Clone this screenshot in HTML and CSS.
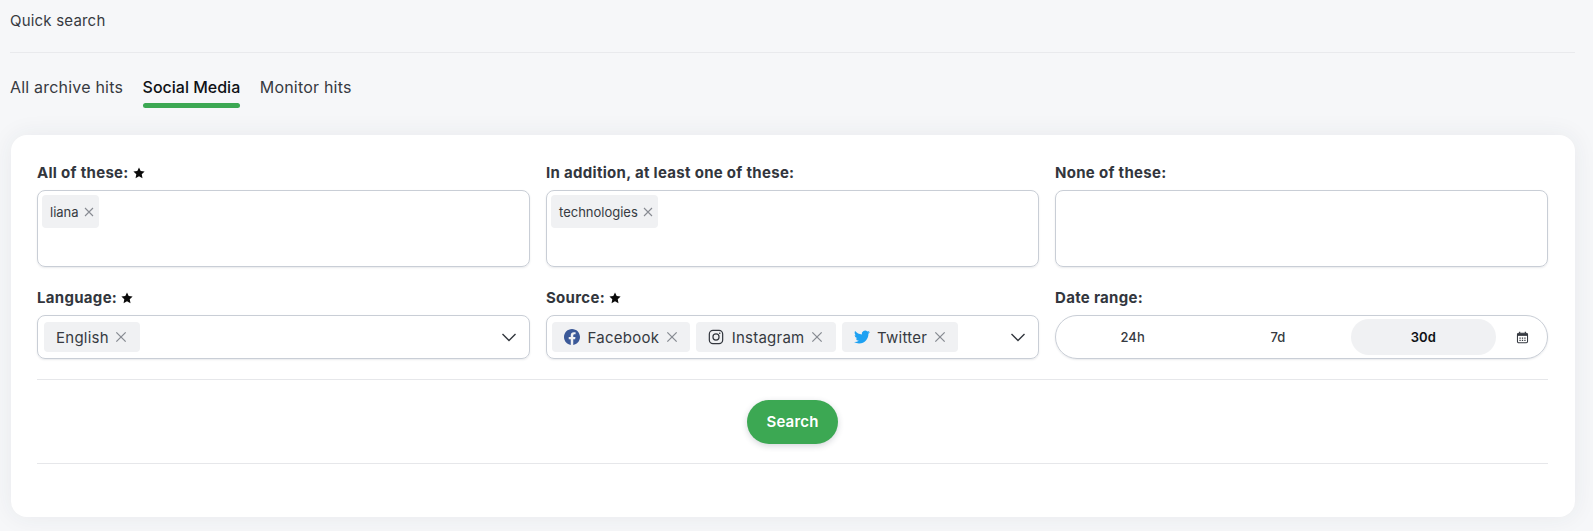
FILE: index.html
```
<!DOCTYPE html>
<html lang="en">
<head>
<meta charset="utf-8">
<title>Quick search</title>
<link rel="stylesheet" href="styles.css">
</head>
<body>
<svg class="defs" width="0" height="0" aria-hidden="true">
  <symbol id="star" viewBox="0 0 24 24"><path d="M12 1l3.400 7.200 7.800 1-5.700 5.400 1.500 7.800L12 18.600l-6.900 3.800 1.500-7.800L.8 9.200l7.800-1z"/></symbol>
  <symbol id="x" viewBox="0 0 12 12"><path d="M2 2l8 8M10 2l-8 8" fill="none" stroke="currentColor" stroke-width="1.1"/></symbol>
  <symbol id="chev" viewBox="0 0 16 10"><path d="M1.500 2l6.500 6.500L14.500 2" fill="none" stroke="currentColor" stroke-width="1.400"/></symbol>
</svg>
<main class="page">
  <h1 class="title">Quick search</h1>
  <nav class="tabs">
    <a class="tab">All archive hits</a>
    <a class="tab active">Social Media</a>
    <a class="tab">Monitor hits</a>
  </nav>
  <section class="card">
    <div class="grid">
      <div class="field">
        <label class="label">All of these: <svg class="star"><use href="#star"/></svg></label>
        <div class="area"><span class="chip">liana <svg class="x"><use href="#x"/></svg></span></div>
      </div>
      <div class="field">
        <label class="label">In addition, at least one of these:</label>
        <div class="area"><span class="chip">technologies <svg class="x"><use href="#x"/></svg></span></div>
      </div>
      <div class="field">
        <label class="label">None of these:</label>
        <div class="area"></div>
      </div>
      <div class="field">
        <label class="label">Language: <svg class="star"><use href="#star"/></svg></label>
        <div class="select">
          <span class="pill">English <svg class="x big"><use href="#x"/></svg></span>
          <svg class="chev"><use href="#chev"/></svg>
        </div>
      </div>
      <div class="field">
        <label class="label">Source: <svg class="star"><use href="#star"/></svg></label>
        <div class="select multi">
          <span class="pill">
            <svg class="brand fb" viewBox="0 0 24 24"><path d="M24 12.070C24 5.400 18.630 0 12 0S0 5.400 0 12.070c0 6.030 4.390 11.020 10.130 11.930v-8.440H7.080v-3.490h3.050V9.410c0-3.020 1.790-4.690 4.530-4.690 1.310 0 2.690.24 2.690.24v2.970h-1.520c-1.490 0-1.960.93-1.960 1.880v2.260h3.330l-.53 3.490h-2.800V24C19.610 23.090 24 18.100 24 12.070z"/></svg>
            Facebook <svg class="x big"><use href="#x"/></svg></span>
          <span class="pill">
            <svg class="brand ig" viewBox="0 0 24 24"><rect x="2" y="2" width="20" height="20" rx="5.500"/><circle cx="12" cy="12" r="4.600"/><circle class="dot" cx="17.600" cy="6.400" r="1.200"/></svg>
            Instagram <svg class="x big"><use href="#x"/></svg></span>
          <span class="pill">
            <svg class="brand tw" viewBox="0 0 24 24"><path d="M23.950 4.570a10 10 0 0 1-2.820.77 4.960 4.960 0 0 0 2.160-2.720c-.95.550-2 .96-3.130 1.190a4.920 4.920 0 0 0-8.380 4.480C7.690 8.090 4.070 6.130 1.640 3.160a4.820 4.820 0 0 0-.67 2.480c0 1.710.87 3.210 2.190 4.090a4.900 4.900 0 0 1-2.230-.62v.06a4.920 4.920 0 0 0 3.950 4.830 5 5 0 0 1-2.210.08 4.940 4.940 0 0 0 4.600 3.420A9.870 9.870 0 0 1 0 19.540a14 14 0 0 0 7.560 2.210c9.050 0 14-7.500 14-13.980 0-.21 0-.42-.02-.63a9.940 9.940 0 0 0 2.410-2.570z"/></svg>
            Twitter <svg class="x big"><use href="#x"/></svg></span>
          <svg class="chev"><use href="#chev"/></svg>
        </div>
      </div>
      <div class="field">
        <label class="label">Date range:</label>
        <div class="range">
          <span class="opt">24h</span>
          <span class="opt">7d</span>
          <span class="opt on">30d</span>
          <svg class="cal" viewBox="0 0 16 16"><path d="M4.500 1v2M11.500 1v2" fill="none" stroke="currentColor" stroke-width="1.500"/><rect x="1.800" y="2.800" width="12.400" height="11.600" rx="1.500" fill="none" stroke="currentColor" stroke-width="1.300"/><path d="M2 3h12v3H2z"/><path d="M4.200 8h1.600v1.400H4.200zM7.200 8h1.600v1.400H7.200zM10.200 8h1.600v1.400h-1.600zM4.200 10.800h1.600v1.400H4.200zM7.200 10.800h1.600v1.400H7.200zM10.200 10.800h1.600v1.400h-1.600z"/></svg>
        </div>
      </div>
    </div>
    <div class="actions"><button class="search" type="button">Search</button></div>
  </section>
</main>
</body>
</html>
```
FILE: styles.css
```
* { box-sizing: border-box; }
html, body { margin: 0; height: 100%; }
body {
  background: #f6f7f9;
  color: #363a41;
  font-family: Inter, "Liberation Sans", sans-serif;
  overflow: hidden;
}
.defs { position: absolute; }
.page { padding: 0 18px 0 10px; }
.title {
  margin: 0;
  height: 53px;
  padding-top: 12px;
  font-size: 15px;
  line-height: 17px;
  font-weight: 400;
  letter-spacing: .2px;
  border-bottom: 1px solid #e9eaed;
}
.tabs { display: flex; gap: 19.500px; margin-top: 22px; height: 33px; }
.tab {
  font-size: 16px;
  line-height: 24px;
  letter-spacing: .2px;
  color: #363a41;
  position: relative;
}
.tab.active { color: #0f1115; font-weight: 450; letter-spacing: 0; }
.tab.active::after {
  content: "";
  position: absolute;
  left: 0; right: 0; bottom: 0;
  height: 5px;
  border-radius: 3px;
  background: #3ca853;
}
.card {
  margin: 27px 0 0 1px;
  height: 382px;
  padding: 27px 27px 0 26px;
  background: #fff;
  border-radius: 16px;
  box-shadow: 0 0 24px rgba(40, 50, 70, .07);
}
.grid { display: grid; grid-template-columns: repeat(3, 1fr); column-gap: 16px; row-gap: 20px; }
.field { display: flex; flex-direction: column; gap: 7px; min-width: 0; }
.label {
  display: flex;
  align-items: center;
  gap: 4px;
  padding-top: 1px;
  font-size: 15px;
  line-height: 20px;
  font-weight: 650;
  letter-spacing: .3px;
  color: #32363d;
}
.star { width: 12px; height: 12px; fill: #0b0b0b; }
.area {
  height: 77px;
  border: 1px solid #c9ced6;
  border-radius: 8px;
  padding: 4px;
  box-shadow: 0 1px 2px rgba(40, 50, 70, .1);
}
.chip {
  display: inline-flex;
  align-items: center;
  gap: 4px;
  height: 33px;
  padding: 0 4px 0 8px;
  background: #f0f1f3;
  border-radius: 4px;
  font-size: 13px;
  color: #363a41;
}
.x { width: 12px; height: 12px; color: #878b92; }
.x.big { width: 14px; height: 14px; }
.select {
  height: 44px;
  border: 1px solid #c9ced6;
  border-radius: 8px;
  padding: 6px;
  display: flex;
  align-items: center;
  gap: 6px;
  box-shadow: 0 1px 2px rgba(40, 50, 70, .1);
}
.select.multi { padding-left: 5px; }
.pill {
  display: inline-flex;
  align-items: center;
  gap: 5.500px;
  height: 30px;
  padding: 0 11.500px 0 12px;
  background: #f0f1f3;
  border-radius: 4px;
  font-size: 15px;
  letter-spacing: .25px;
}
.chev { width: 16px; height: 10px; margin-left: auto; margin-right: 6px; color: #32363d; }
.brand { width: 16px; height: 16px; margin-right: 2px; }
.fb { fill: #3b5998; }
.tw { fill: #1da1f2; }
.ig { fill: none; stroke: #32363d; stroke-width: 1.800; }
.ig .dot { fill: #32363d; stroke: none; }
.range {
  height: 44px;
  border: 1px solid #c9ced6;
  border-radius: 22px;
  padding: 3px 4px;
  display: grid;
  grid-template-columns: 1fr 1fr 1fr 47px;
  align-items: stretch;
  box-shadow: 0 1px 2px rgba(40, 50, 70, .1);
}
.opt {
  display: flex;
  align-items: center;
  justify-content: center;
  font-size: 13px;
  font-weight: 500;
  letter-spacing: .1px;
  border-radius: 19px;
}
.opt.on { background: #f0f1f3; color: #0f1115; font-weight: 600; }
.cal { width: 13px; height: 13px; align-self: center; justify-self: end; margin-right: 14px; fill: currentColor; }
.actions {
  margin-top: 20px;
  height: 85px;
  border-top: 1px solid #e6e7ea;
  border-bottom: 1px solid #e6e7ea;
  display: flex;
  justify-content: center;
  align-items: center;
}
.search {
  width: 91px;
  height: 44px;
  border: 0;
  border-radius: 22px;
  background: #3ca853;
  color: #fff;
  font: 600 15px Inter, "Liberation Sans", sans-serif;
  letter-spacing: .2px;
  box-shadow: 0 2px 6px rgba(40, 50, 70, .2);
}
```
